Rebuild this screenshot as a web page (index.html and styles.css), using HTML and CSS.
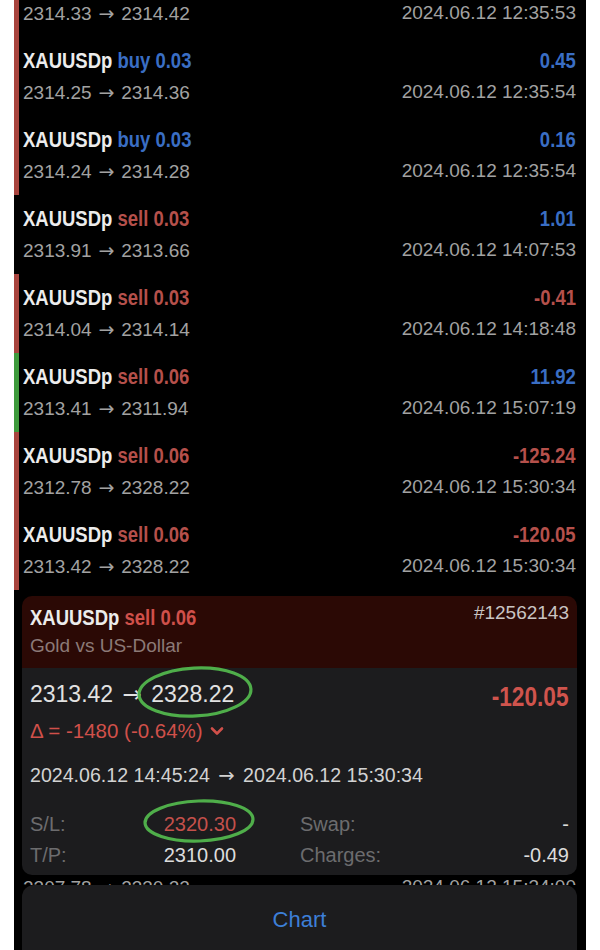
FILE: index.html
```
<!DOCTYPE html>
<html>
<head>
<meta charset="utf-8">
<link rel="stylesheet" href="styles.css">
</head>
<body>
<div class="phone">
  <div class="list">
    <div class="row bar-red">
      <div class="l1"><span class="sym">XAUUSDp <span class="buy">buy 0.03</span></span><span class="pl buy">0.09</span></div>
      <div class="l2"><span>2314.33 <span class="arr">→</span> 2314.42</span><span>2024.06.12 12:35:53</span></div>
    </div>
    <div class="row bar-red">
      <div class="l1"><span class="sym">XAUUSDp <span class="buy">buy 0.03</span></span><span class="pl buy">0.45</span></div>
      <div class="l2"><span>2314.25 <span class="arr">→</span> 2314.36</span><span>2024.06.12 12:35:54</span></div>
    </div>
    <div class="row bar-red">
      <div class="l1"><span class="sym">XAUUSDp <span class="buy">buy 0.03</span></span><span class="pl buy">0.16</span></div>
      <div class="l2"><span>2314.24 <span class="arr">→</span> 2314.28</span><span>2024.06.12 12:35:54</span></div>
    </div>
    <div class="row">
      <div class="l1"><span class="sym">XAUUSDp <span class="sell">sell 0.03</span></span><span class="pl buy">1.01</span></div>
      <div class="l2"><span>2313.91 <span class="arr">→</span> 2313.66</span><span>2024.06.12 14:07:53</span></div>
    </div>
    <div class="row bar-red">
      <div class="l1"><span class="sym">XAUUSDp <span class="sell">sell 0.03</span></span><span class="pl sell">-0.41</span></div>
      <div class="l2"><span>2314.04 <span class="arr">→</span> 2314.14</span><span>2024.06.12 14:18:48</span></div>
    </div>
    <div class="row bar-green">
      <div class="l1"><span class="sym">XAUUSDp <span class="sell">sell 0.06</span></span><span class="pl buy">11.92</span></div>
      <div class="l2"><span>2313.41 <span class="arr">→</span> 2311.94</span><span>2024.06.12 15:07:19</span></div>
    </div>
    <div class="row bar-red">
      <div class="l1"><span class="sym">XAUUSDp <span class="sell">sell 0.06</span></span><span class="pl sell">-125.24</span></div>
      <div class="l2"><span>2312.78 <span class="arr">→</span> 2328.22</span><span>2024.06.12 15:30:34</span></div>
    </div>
    <div class="row bar-red">
      <div class="l1"><span class="sym">XAUUSDp <span class="sell">sell 0.06</span></span><span class="pl sell">-120.05</span></div>
      <div class="l2"><span>2313.42 <span class="arr">→</span> 2328.22</span><span>2024.06.12 15:30:34</span></div>
    </div>
  </div>

  <div class="card">
    <div class="card-head">
      <div class="head-top">
        <span class="sym">XAUUSDp <span class="sell-hi">sell 0.06</span></span>
        <span class="ticket">#12562143</span>
      </div>
      <div class="desc">Gold vs US-Dollar</div>
    </div>
    <div class="card-body">
      <div class="pos-top">
        <span class="prices">2313.42 <span class="arr wide">→</span> 2328.22</span>
        <span class="big-pl">-120.05</span>
      </div>
      <div class="delta">Δ = -1480 (-0.64%) <svg class="chev" width="14" height="10" viewBox="0 0 14 10"><path d="M2 2.5 L7 7.5 L12 2.5" fill="none" stroke="#d0504a" stroke-width="2.6" stroke-linecap="round" stroke-linejoin="round"/></svg></div>
      <div class="dates">2024.06.12 14:45:24 <span class="arr wide">→</span> 2024.06.12 15:30:34</div>
      <div class="grid">
        <div class="cell"><span class="lbl">S/L:</span><span class="val red">2320.30</span></div>
        <div class="cell"><span class="lbl">Swap:</span><span class="val">-</span></div>
        <div class="cell"><span class="lbl">T/P:</span><span class="val">2310.00</span></div>
        <div class="cell"><span class="lbl">Charges:</span><span class="val">-0.49</span></div>
      </div>
    </div>
    <svg class="mark mark1" width="118" height="54" viewBox="0 0 118 54"><ellipse cx="59" cy="27" rx="56" ry="24" fill="none" stroke="#4fae4a" stroke-width="3.2" transform="rotate(-3 59 27)"/></svg>
    <svg class="mark mark2" width="114" height="46" viewBox="0 0 114 46"><ellipse cx="57" cy="23" rx="54" ry="20" fill="none" stroke="#4fae4a" stroke-width="3.2" transform="rotate(-2 57 23)"/></svg>
  </div>

  <div class="peek"><span>2307.78 <span class="arr">→</span> 2330.22</span><span>2024.06.12 15:34:00</span></div>

  <div class="sheet"><span class="chart">Chart</span></div>
</div>
</body>
</html>
```

FILE: styles.css
```
html, body {
  margin: 0;
  padding: 0;
  background: #ffffff;
}
.phone {
  margin-left: 14px;
  width: 572px;
  height: 950px;
  background: #000;
  overflow: hidden;
  font-family: "Liberation Sans", Arial, sans-serif;
}
.arr {
  font-family: "DejaVu Sans", sans-serif;
  margin: 0 1.5px;
}
.arr.wide {
  margin: 0 3px;
}
.list {
  margin-top: -42px;
}
.row {
  box-sizing: border-box;
  height: 79px;
  padding: 11px 10px 0 4px;
  border-left: 5px solid transparent;
}
.bar-red { border-left-color: #a8443e; }
.bar-green { border-left-color: #3e9a3c; }
.l1, .l2 {
  display: flex;
  justify-content: space-between;
  align-items: center;
}
.l1 {
  height: 26px;
}
.l2 {
  margin-top: 6px;
  height: 24px;
  font-size: 19px;
  color: #a2a2a2;
}
.sym, .pl, .big-pl {
  display: inline-block;
  font-family: "Liberation Sans", Arial, sans-serif;
  font-weight: bold;
  font-size: 22px;
  color: #ececec;
  white-space: nowrap;
}
.sym {
  transform: scaleX(0.84);
  transform-origin: left center;
}
.pl, .big-pl {
  transform: scaleX(0.84);
  transform-origin: right center;
}
.buy { color: #3a6ec4; }
.sell { color: #b5504b; }
.sell-hi { color: #d0504a; }

.card {
  position: relative;
  margin: 6px 9px 0 8px;
  border-radius: 10px;
  overflow: hidden;
}
.card-head {
  background: #2b0905;
  height: 72px;
  box-sizing: border-box;
  padding: 6px 8px 0 8px;
}
.head-top {
  display: flex;
  justify-content: space-between;
  align-items: flex-start;
}
.head-top .sym {
  line-height: 26px;
  margin-top: 3px;
}
.ticket {
  font-size: 19px;
  line-height: 22px;
  color: #c9c4c3;
}
.desc {
  margin-top: 3px;
  font-size: 19px;
  line-height: 24px;
  color: #8c7a77;
}
.card-body {
  background: #1c1c1e;
  padding: 12px 8px 6px 8px;
}
.pos-top {
  display: flex;
  justify-content: space-between;
  align-items: flex-start;
}
.prices {
  font-size: 23px;
  line-height: 28px;
  color: #e2e2e2;
}
.big-pl {
  font-size: 27px;
  line-height: 28px;
  padding-top: 3px;
  color: #d0544d;
}
.delta {
  margin-top: 8px;
  font-size: 20.5px;
  line-height: 24px;
  color: #d0504a;
  display: flex;
  align-items: center;
  gap: 7px;
}
.chev {
  display: block;
}
.dates {
  margin-top: 20px;
  font-size: 19.6px;
  line-height: 24px;
  color: #d2d2d2;
}
.grid {
  margin-top: 22px;
  display: grid;
  grid-template-columns: 206px 1fr;
  column-gap: 64px;
  row-gap: 3px;
}
.cell {
  display: flex;
  justify-content: space-between;
  font-size: 20px;
  line-height: 28px;
}
.lbl { color: #6c6c6e; }
.val { color: #dcdcdc; }
.val.red { color: #c4504b; }

.mark {
  position: absolute;
  display: block;
}
.mark1 { left: 114px; top: 69px; }
.mark2 { left: 120px; top: 202px; }

.peek {
  height: 10px;
  overflow: hidden;
  display: flex;
  justify-content: space-between;
  padding: 0 10px 0 9px;
  font-size: 19px;
  line-height: 24px;
  color: #a2a2a2;
}
.sheet {
  margin: 0 9px 0 8px;
  height: 90px;
  box-sizing: border-box;
  background: #1c1c1e;
  border-radius: 12px 12px 0 0;
  padding-top: 22px;
  text-align: center;
}
.chart {
  font-size: 22px;
  line-height: 26px;
  color: #3d7fd8;
}
```
